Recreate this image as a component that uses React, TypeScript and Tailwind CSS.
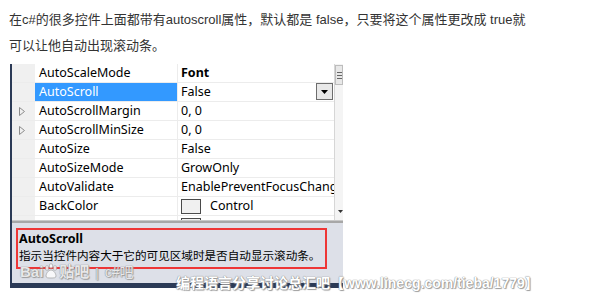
type Row = {
  name: string;
  value: string;
  bold?: boolean;
  selected?: boolean;
  expand?: boolean;
  swatch?: boolean;
  dropdown?: boolean;
};

const rows: Row[] = [
  { name: "AutoScaleMode", value: "Font", bold: true },
  { name: "AutoScroll", value: "False", selected: true, dropdown: true },
  { name: "AutoScrollMargin", value: "0, 0", expand: true },
  { name: "AutoScrollMinSize", value: "0, 0", expand: true },
  { name: "AutoSize", value: "False" },
  { name: "AutoSizeMode", value: "GrowOnly" },
  { name: "AutoValidate", value: "EnablePreventFocusChang" },
  { name: "BackColor", value: "Control", swatch: true },
  // partly hidden under the description panel
  { name: "", value: "", swatch: true },
];

const grid = '[font-family:"Noto_Sans","Liberation_Sans",sans-serif]';
const cjk = '[font-family:"Liberation_Sans","Noto_Sans_CJK_SC",sans-serif]';
const glow = "[text-shadow:0_0_1px_#8a8a8a,0_0_1px_#8a8a8a,1px_1px_1px_#a0a0a0]";

function PropRow({ row }: { row: Row }) {
  return (
    <div className="flex h-[19px] shrink-0 border-b border-[#ececec]">
      {/* gutter */}
      <div className="flex w-[23px] shrink-0 items-center justify-center bg-[#f0f0f0] pr-[4px]">
        {row.expand && (
          <svg width="6" height="9" viewBox="0 0 6 9">
            <path d="M0.5 0.5L5.5 4.5L0.5 8.5z" fill="none" stroke="#8c8c8c" strokeWidth="1" />
          </svg>
        )}
      </div>
      {/* name */}
      <div
        className={`flex w-[142px] shrink-0 items-center overflow-hidden pl-[4px] text-[12.5px] whitespace-nowrap ${
          row.selected ? "bg-[#3399ff] text-white" : "bg-white text-black"
        }`}
      >
        {row.name}
      </div>
      <div className="w-px shrink-0 bg-[#ececec]" />
      {/* value */}
      <div className="relative flex w-[156px] shrink-0 items-center overflow-hidden bg-white pl-[3px] text-[12.5px] whitespace-nowrap text-black">
        {row.swatch && (
          <span className="mr-[9px] h-[15px] w-[20px] shrink-0 border border-[#4a4a4a] bg-[#f0f0f0]" />
        )}
        <span className={row.bold ? "font-bold" : ""}>{row.value}</span>
        {row.dropdown && (
          <span className="absolute top-0 right-[1px] flex h-[17px] w-[17px] items-center justify-center border border-[#6d6d6d] bg-[#e8e8e8]">
            <svg width="7" height="4" viewBox="0 0 7 4">
              <path d="M0 0h7L3.5 4z" fill="#000" />
            </svg>
          </span>
        )}
      </div>
    </div>
  );
}

export default function App() {
  return (
    <div className="relative h-[302px] w-[592px] overflow-hidden bg-white">
      <p className={`px-[9px] pt-[7px] text-[13px] leading-[26px] text-[#333] ${cjk}`}>
        在c#的很多控件上面都带有autoscroll属性，默认都是 false，只要将这个属性更改成 true就
        <br />
        可以让他自动出现滚动条。
      </p>

      <div className={`mt-[5px] ml-[10px] flex w-[333px] flex-col border-l-2 border-[#2b3a56] ${grid}`}>
        <div className="flex h-[156px]">
          <div className="flex w-[322px] flex-col overflow-hidden">
            {rows.map((r, i) => (
              <PropRow key={i} row={r} />
            ))}
          </div>
          {/* scrollbar */}
          <div className="flex w-[9px] flex-col justify-between border-l border-[#d6d6d6] bg-[#f4f4f4] pt-[1px] pb-[6px]">
            <div className="flex h-[20px] w-[8px] flex-col items-center justify-center gap-[2px] border border-[#bdbdbd] bg-[#e8e8e8]">
              <span className="h-px w-[5px] bg-[#666]" />
              <span className="h-px w-[5px] bg-[#666]" />
              <span className="h-px w-[5px] bg-[#666]" />
            </div>
            <svg width="8" height="4" viewBox="0 0 8 4" className="ml-[3px]">
              <path d="M0 0h5L2.5 3z" fill="#333" />
            </svg>
          </div>
        </div>
        <div className="h-[3px] border-t border-[#c9c9c9] bg-[#a7a7a7]" />
        <div className="h-[60px] bg-[#dde0e8] pt-[5px] pl-[4px]">
          <div className="flex h-[41px] w-[311px] flex-col border-2 border-[#ee3636] pl-[1px]">
            <div className="text-[12.5px] leading-[17px] font-bold text-black">AutoScroll</div>
            <div className={`text-[11.6px] leading-[17px] whitespace-nowrap text-black ${cjk}`}>
              指示当控件内容大于它的可见区域时是否自动显示滚动条。
            </div>
          </div>
        </div>
        <div className="h-[5px] bg-[#2b3a56]" />
      </div>

      {/* watermarks */}
      <div className={`absolute top-[261px] left-[20px] flex items-center text-[15px] text-white/80 ${glow} ${cjk}`}>
        <span className="font-bold">Bai</span>
        <svg width="16" height="16" viewBox="0 0 16 16" className="-mt-[2px] opacity-80">
          <g fill="#fff" stroke="#9a9a9a" strokeWidth="0.8">
            <ellipse cx="4" cy="5" rx="1.8" ry="2.3" />
            <ellipse cx="8" cy="3" rx="1.8" ry="2.3" />
            <ellipse cx="12" cy="5" rx="1.8" ry="2.3" />
            <path d="M8 7c-3 0-5 4-5 6s2 2 5 2 5 0 5-2-2-6-5-6z" />
          </g>
        </svg>
        <span className="font-bold">贴吧</span>
        <span className="mx-[6px] text-[13px] text-[#e4e4e4]">|</span>
        <span className="text-[14px]">c#吧</span>
      </div>
      <div className={`absolute top-[273px] left-[176px] text-[14px] font-bold whitespace-nowrap text-white ${glow} ${cjk}`}>
        编程语言分享讨论总汇吧【www.linecg.com/tieba/1779】
      </div>
    </div>
  );
}
